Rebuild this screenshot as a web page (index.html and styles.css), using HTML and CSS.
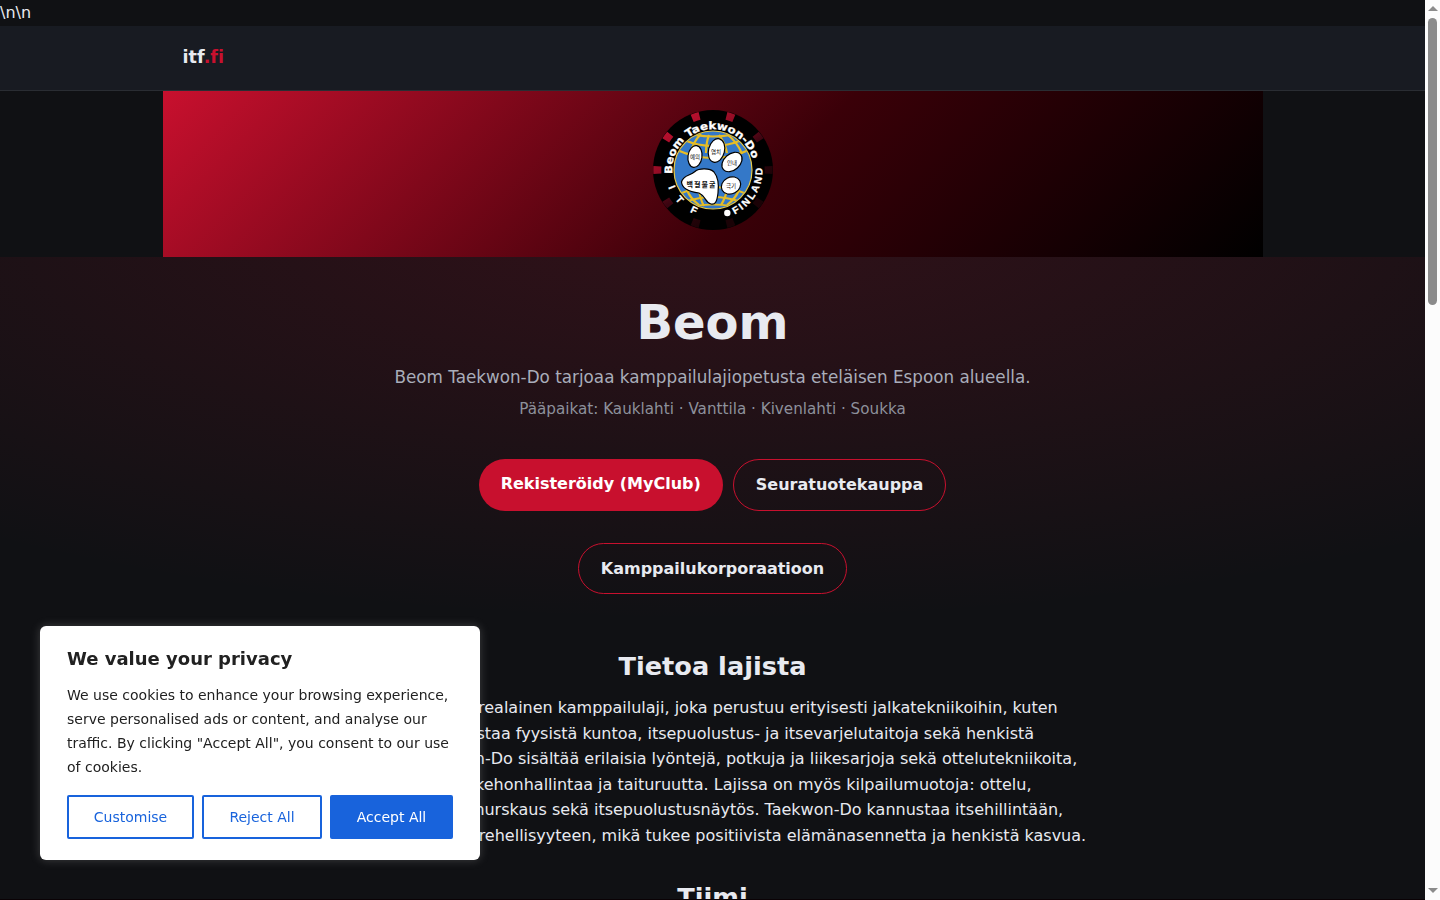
FILE: index.html
```
<!DOCTYPE html>
<html lang="fi">

<head>
    <meta charset="UTF-8">
    <meta name="viewport" content="width=device-width, initial-scale=1.0">
    <title>Beom - itf.fi</title>
    <link rel="stylesheet" href="styles.css">
</head>

<body>
    <div class="page">
        \n\n
        <header class="site-header">
            <div class="container">
                <a class="brand" href="#">itf<span>.fi</span></a>
            </div>
        </header>

        <div class="club-banner">
            <svg class="club-logo" viewBox="0 0 120 120" role="img" aria-label="Beom Taekwon-Do">
                <defs>
                    <path id="arc-name" d="M19.400 64A40.800 40.800 0 1 1 100.600 64" />
                    <path id="arc-itf" d="M12 60A48 48 0 0 0 108 60" />
                    <path id="arc-finland" d="M10.500 60A49.500 49.500 0 1 0 109.340 56" />
                    <clipPath id="globe"><circle cx="60" cy="60" r="38.500" /></clipPath>
                    <linearGradient id="notch" gradientUnits="userSpaceOnUse" x1="20" y1="20" x2="75" y2="100">
                        <stop offset="0" stop-color="#b50f2d" />
                        <stop offset="0.300" stop-color="#8f0c24" />
                        <stop offset="0.600" stop-color="#3a0410" />
                        <stop offset="1" stop-color="#1a0206" />
                    </linearGradient>
                </defs>
                <!-- outer ring with notches -->
                <circle cx="60" cy="60" r="60" fill="#000" />
                <circle cx="60" cy="60" r="55.700" fill="none" stroke="url(#notch)" stroke-width="8" pathLength="100" stroke-dasharray="2.200 7.800" stroke-dashoffset="1.100" />
                <!-- globe -->
                <circle cx="60" cy="60" r="39" fill="#3478c8" stroke="#e5c94a" stroke-width="1.200" />
                <g clip-path="url(#globe)" fill="none" stroke="#e6bd25" stroke-width="2.200">
                    <path d="M24 40q36 16 72 0M31 30q29 12 58 0M42 25q18 3 36 0M26 84q34-14 68 0M32 92q28-10 56 0M42 96q18-3 36 0" />
                    <path d="M48 24q-8 8-11 20M56 25q-3 8-3 18M66 25q6 8 8 18M74 24q11 9 15 20M34 80q3 8 12 15M46 79q1 10 5 17M74 79q-1 8-6 16M86 80q-3 8-12 15" />
                </g>
                <!-- tiger paw -->
                <g fill="#fff" stroke="#000" stroke-width="1.200">
                    <ellipse cx="42" cy="46.500" rx="7" ry="11" transform="rotate(8 42 46.500)" />
                    <ellipse cx="63.500" cy="40.500" rx="8" ry="12" transform="rotate(14 63.500 40.500)" />
                    <ellipse cx="79" cy="52" rx="8" ry="11.500" transform="rotate(48 79 52)" />
                    <ellipse cx="78" cy="75.500" rx="10" ry="8.300" transform="rotate(-28 78 75.500)" />
                    <path d="M28.500 72C30 65 37 66 42 61.500C46 58 57 58 61 62C65 67 66 75 65 83C64 92 62 95 58 94C52 93 53 86 46 83C38 82 29 79 28.500 72Z" />
                </g>
                <g class="logo-korean">
                    <text x="42" y="49">예의</text>
                    <text x="63" y="43.500">염치</text>
                    <text x="79" y="55">인내</text>
                    <text x="78" y="78">극기</text>
                    <text class="logo-korean-big" x="48" y="76.500" textLength="29">백절불굴</text>
                </g>
                <g class="logo-text">
                    <text><textPath href="#arc-name" textLength="121" lengthAdjust="spacingAndGlyphs">Beom Taekwon-Do</textPath></text>
                    <text class="logo-small"><textPath href="#arc-finland" startOffset="100" textLength="57">FINLAND</textPath></text>
                    <text class="logo-small"><textPath href="#arc-itf" startOffset="17.500">I</textPath></text>
                    <text class="logo-small"><textPath href="#arc-itf" startOffset="31.500">T</textPath></text>
                    <text class="logo-small"><textPath href="#arc-itf" startOffset="51">F</textPath></text>
                </g>
                <circle cx="74.300" cy="103" r="3.200" fill="#fff" />
            </svg>
        </div>

        <section class="hero">
            <h1>Beom</h1>
            <p class="tagline">Beom Taekwon-Do tarjoaa kamppailulajiopetusta eteläisen Espoon alueella.</p>
            <p class="places">Pääpaikat: Kauklahti · Vanttila · Kivenlahti · Soukka</p>
            <div class="hero-buttons">
                <a class="btn btn-primary" href="#">Rekisteröidy (MyClub)</a>
                <a class="btn btn-outline" href="#">Seuratuotekauppa</a>
                <a class="btn btn-outline" href="#">Kamppailukorporaatioon</a>
            </div>
        </section>

        <section class="about">
            <h2>Tietoa lajista</h2>
            <p>Taekwon-Do on korealainen kamppailulaji, joka perustuu erityisesti jalkatekniikoihin, kuten potkuun. Se vahvistaa fyysistä kuntoa, itsepuolustus- ja itsevarjelutaitoja sekä henkistä kehitystä. Taekwon-Do sisältää erilaisia lyöntejä, potkuja ja liikesarjoja sekä ottelutekniikoita, jotka harjoittavat kehonhallintaa ja taituruutta. Lajissa on myös kilpailumuotoja: ottelu, liikesarjat, voimamurskaus sekä itsepuolustusnäytös. Taekwon-Do kannustaa itsehillintään, kunnioitukseen ja rehellisyyteen, mikä tukee positiivista elämänasennetta ja henkistä kasvua.</p>
            <h2>Tiimi</h2>
        </section>
    </div>

    <div class="bottom-bar"></div>

    <div class="cookie-box">
        <p class="cookie-title">We value your privacy</p>
        <p class="cookie-text">We use cookies to enhance your browsing experience, serve personalised ads or content, and analyse our traffic. By clicking "Accept All", you consent to our use of cookies.</p>
        <div class="cookie-buttons">
            <button class="customise">Customise</button>
            <button class="reject">Reject All</button>
            <button class="accept">Accept All</button>
        </div>
    </div>

    <div class="scrollbar">
        <span class="arrow-up"></span>
        <span class="thumb"></span>
        <span class="arrow-down"></span>
    </div>
</body>

</html>
```
FILE: styles.css
```
* {
    box-sizing: border-box;
}

body {
    margin: 0;
    background-color: #101114;
    color: #e8eaf0;
    font-family: "DejaVu Sans", sans-serif;
    font-size: 16px;
    line-height: 1.6;
}

h1, h2, p {
    margin: 0;
}

a {
    text-decoration: none;
}

.page {
    width: 1425px;
    height: 900px;
    overflow: hidden;
}

/* Header */
.site-header {
    height: 65px;
    background-color: #181b22;
    border-bottom: 1px solid #2a2d33;
}

.container {
    width: 1100px;
    margin: 0 auto;
    padding: 17px 20px;
}

.brand {
    color: #e8eaf0;
    font-size: 17.6px;
    font-weight: bold;
    font-variant-ligatures: none;
}

.brand span {
    color: #c8102e;
}

.club-banner {
    width: 1100px;
    height: 166px;
    margin: 0 auto;
    padding-top: 19px;
    background: linear-gradient(135deg, #c8102e 0%, #3a0008 55%, #000 100%);
}

.club-logo {
    display: block;
    width: 120px;
    height: 120px;
    margin: 0 auto;
}

.logo-text {
    fill: #fff;
    font-family: "DejaVu Sans", sans-serif;
    font-size: 10.5px;
    font-weight: bold;
    stroke: #fff;
    stroke-width: 0.3px;
}

.logo-small {
    font-family: "Liberation Sans", sans-serif;
    font-size: 10px;
}

.logo-korean {
    fill: #111;
    font-family: "Noto Sans CJK KR", sans-serif;
    font-size: 5.5px;
    text-anchor: middle;
}

.logo-korean-big {
    font-size: 7px;
    font-weight: bold;
}

/* Hero */
.hero {
    height: 360px;
    padding-top: 27px;
    text-align: center;
    background: radial-gradient(1200px 400px at 50% -10%, rgba(200, 16, 46, 0.18), transparent);
}

.hero h1 {
    font-size: 48px;
    line-height: 76.8px;
}

.tagline {
    margin-top: 4px;
    color: #a9adba;
    font-size: 16.8px;
}

.places {
    margin-top: 6px;
    color: #8d909b;
    font-size: 15.2px;
}

.hero-buttons {
    display: flex;
    flex-wrap: wrap;
    justify-content: center;
    gap: 32px 10px;
    width: 700px;
    margin: 37.7px auto 0;
}

.btn {
    padding: 12px 22px;
    border-radius: 30px;
    font-weight: bold;
}

.btn-primary {
    background-color: #c8102e;
    color: #fff;
}

.btn-outline {
    border: 1px solid #c8102e;
    color: #e8eaf0;
}

/* About */
.about {
    width: 800px;
    margin: 0 auto;
    padding: 29px 20px;
}

.about h2 {
    margin-bottom: 8.5px;
    font-size: 25.6px;
    line-height: 41px;
    text-align: center;
}

.about p {
    margin-bottom: 28.5px;
}

.bottom-bar {
    position: fixed;
    left: 0;
    bottom: 0;
    width: 1425px;
    height: 1px;
    background-color: #0a0205;
}

/* Cookie consent */
.cookie-box {
    position: fixed;
    left: 40px;
    bottom: 40px;
    width: 440px;
    height: 234px;
    padding: 20px 27px;
    background-color: #fff;
    color: #212121;
    border-radius: 6px;
    box-shadow: 0 0 10px rgba(172, 171, 171, 0.3);
}

.cookie-title {
    margin-bottom: 12px;
    font-size: 18px;
    font-weight: bold;
    line-height: 25px;
}

.cookie-text {
    font-size: 14px;
    line-height: 24px;
}

.cookie-buttons {
    display: flex;
    gap: 8px;
    margin-top: 16px;
}

.cookie-buttons button {
    height: 44px;
    padding: 0;
    border: 2px solid #1863dc;
    border-radius: 2px;
    background-color: #fff;
    color: #1863dc;
    font-family: inherit;
    font-size: 14px;
}

.cookie-buttons .customise {
    width: 127px;
}

.cookie-buttons .reject {
    width: 120px;
}

.cookie-buttons .accept {
    width: 123px;
    background-color: #1863dc;
    color: #fff;
}

/* Scrollbar */
.scrollbar {
    position: fixed;
    top: 0;
    right: 0;
    width: 15px;
    height: 900px;
    padding: 6px 0 7px;
    display: flex;
    flex-direction: column;
    align-items: center;
    background-color: #fcfcfc;
}

.arrow-up, .arrow-down {
    border-left: 5px solid transparent;
    border-right: 5px solid transparent;
}

.arrow-up {
    border-bottom: 5px solid #8b8b8b;
}

.arrow-down {
    margin-top: auto;
    border-top: 5px solid #8b8b8b;
}

.thumb {
    width: 9px;
    height: 287px;
    margin-top: 7px;
    border-radius: 5px;
    background-color: #8b8b8b;
}
```
